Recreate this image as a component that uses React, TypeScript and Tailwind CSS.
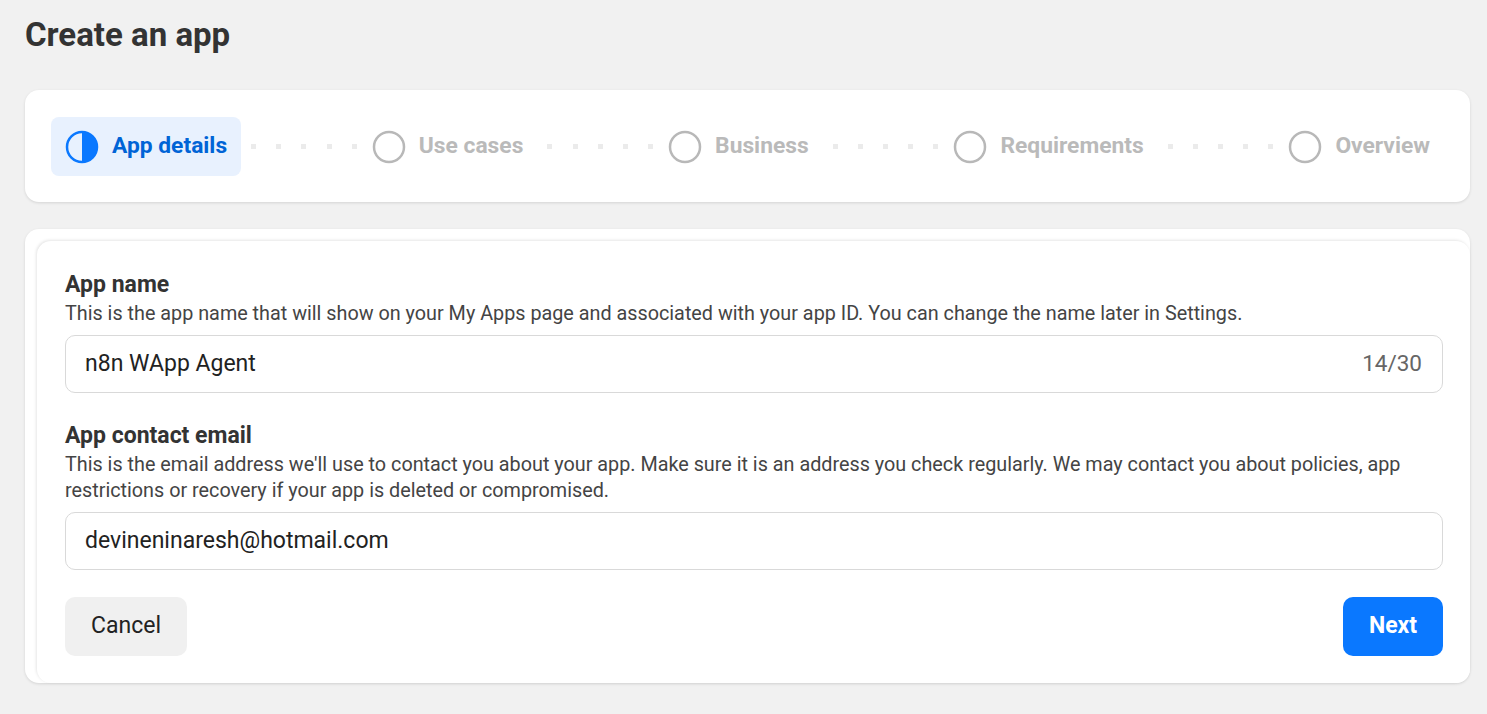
import React from "react";

const steps = ["App details", "Use cases", "Business", "Requirements", "Overview"];

function HalfCircle() {
  return (
    <svg width="34" height="34" viewBox="0 0 34 34">
      <circle cx="17" cy="17" r="15" fill="none" stroke="#0a78ff" strokeWidth="2.5" />
      <path d="M17 2 A15 15 0 0 1 17 32 Z" fill="#0a78ff" />
    </svg>
  );
}

function EmptyCircle() {
  return (
    <svg width="34" height="34" viewBox="0 0 34 34">
      <circle cx="17" cy="17" r="15" fill="none" stroke="#b8b8b8" strokeWidth="2.5" />
    </svg>
  );
}

function Dots() {
  return (
    <div className="flex flex-1 items-center justify-between pl-[10px] pr-[1px]">
      {[0, 1, 2, 3, 4].map((i) => (
        <span key={i} className="block w-[5px] h-[5px] bg-[#ebebeb]" />
      ))}
    </div>
  );
}

export default function App() {
  return (
    <div className="min-h-screen bg-[#f1f1f1] pl-[25px] pr-[17px] pt-[15px] pb-8 font-['Roboto',sans-serif]">
      <h1 className="text-[33px] leading-[40px] font-bold text-[#333]">Create an app</h1>

      {/* Stepper */}
      <div className="mt-[35px] bg-white rounded-[14px] shadow-[0_1px_3px_rgba(0,0,0,0.12)] px-[26px] pt-[27px] pb-[26px] flex items-center">
        {steps.map((s, i) => (
          <React.Fragment key={s}>
            {i > 0 && <Dots />}
            <div
              className={`flex items-center gap-[13px] px-[14px] h-[59px] rounded-[8px] ${
                i === 0 ? "bg-[#e8f1fe]" : ""
              }`}
            >
              {i === 0 ? <HalfCircle /> : <EmptyCircle />}
              <span
                className={`text-[22.8px] font-bold whitespace-nowrap ${
                  i === 0 ? "text-[#0064d6]" : "text-[#bababa]"
                }`}
              >
                {s}
              </span>
            </div>
          </React.Fragment>
        ))}
      </div>

      {/* Form */}
      <div className="mt-[27px] bg-white rounded-[14px] shadow-[0_1px_3px_rgba(0,0,0,0.12)] pl-3 pt-3">
        <div className="bg-white rounded-[14px] shadow-[-1px_-1px_3px_rgba(0,0,0,0.1)] pl-[28px] pr-[27px] pt-[30px] pb-[27px]">
          <div className="text-[23px] leading-[28px] font-bold text-[#333]">App name</div>
          <p className="mt-[2px] text-[19.8px] leading-[26px] text-[#444]">
            This is the app name that will show on your My Apps page and associated with your app ID. You can change the name later in Settings.
          </p>
          <div className="mt-[8px] h-[58px] border border-[#d9d9d9] rounded-[10px] flex items-center justify-between pl-[19px] pr-[20px]">
            <span className="text-[23px] text-[#222]">n8n WApp Agent</span>
            <span className="text-[22.5px] text-[#666]">14/30</span>
          </div>

          <div className="mt-[29px] text-[23px] leading-[28px] font-bold text-[#333]">App contact email</div>
          <p className="mt-[2px] text-[19.8px] leading-[26px] text-[#444]">
            This is the email address we'll use to contact you about your app. Make sure it is an address you check regularly. We may contact you about policies, app restrictions or recovery if your app is deleted or compromised.
          </p>
          <div className="mt-[8px] h-[58px] border border-[#d9d9d9] rounded-[10px] flex items-center pl-[19px] pr-[20px]">
            <span className="text-[23px] text-[#222]">devineninaresh@hotmail.com</span>
          </div>

          <div className="mt-[27px] flex items-center justify-between">
            <button className="h-[59px] w-[122px] rounded-[10px] bg-[#f0f0f0] text-[23px] text-[#222]">Cancel</button>
            <button className="h-[59px] w-[100px] rounded-[10px] bg-[#0a78ff] text-[23px] font-bold text-white">Next</button>
          </div>
        </div>
      </div>
    </div>
  );
}
